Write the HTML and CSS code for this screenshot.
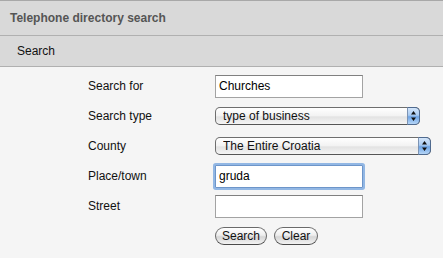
FILE: index.html
```html
<!DOCTYPE html>
<html lang="en">
<head>
    <meta charset="UTF-8">
    <meta name="viewport" content="width=device-width, initial-scale=1.0">
    <title>Telephone directory search</title>
    <link rel="stylesheet" href="styles.css">
</head>
<body>

<div class="title">Telephone directory search</div>
<div class="subtitle">Search</div>

<form class="search-form" action="#" method="get">
    <div class="row">
        <label for="searchFor">Search for</label>
        <input type="text" id="searchFor" class="text-field" value="Churches">
    </div>
    <div class="row">
        <label for="searchType">Search type</label>
        <span class="select-wrap type-select">
            <select id="searchType" class="select-field">
                <option>type of business</option>
            </select>
            <span class="knob">
                <svg width="7" height="12" viewBox="0 0 7 12"><path d="M3.5 1 L6 4.5 L1 4.5 Z M3.5 11 L6 7.5 L1 7.5 Z" fill="#111"/></svg>
            </span>
        </span>
    </div>
    <div class="row">
        <label for="county">County</label>
        <span class="select-wrap county-select">
            <select id="county" class="select-field">
                <option>The Entire Croatia</option>
            </select>
            <span class="knob">
                <svg width="7" height="12" viewBox="0 0 7 12"><path d="M3.5 1 L6 4.5 L1 4.5 Z M3.5 11 L6 7.5 L1 7.5 Z" fill="#111"/></svg>
            </span>
        </span>
    </div>
    <div class="row">
        <label for="place">Place/town</label>
        <input type="text" id="place" class="text-field focused" value="gruda">
    </div>
    <div class="row">
        <label for="street">Street</label>
        <input type="text" id="street" class="text-field" value="">
    </div>
    <div class="row">
        <span></span>
        <div class="buttons">
            <button type="submit" class="pill search-btn">Search</button>
            <button type="reset" class="pill clear-btn">Clear</button>
        </div>
    </div>
</form>

</body>
</html>
```

FILE: styles.css
```css
body {
    margin: 0;
    font-family: "Liberation Sans", Arial, sans-serif;
    font-size: 12px;
    background-color: #f5f5f5;
    color: #111;
}

.title {
    height: 34px;
    line-height: 34px;
    padding-left: 10px;
    background-color: #d9d9d9;
    border-top: 1px solid #a8a8a8;
    border-bottom: 1px solid #b0b0b0;
    font-weight: bold;
    color: #555;
}

.subtitle {
    height: 30px;
    line-height: 30px;
    padding-left: 17px;
    background-color: #d9d9d9;
    border-bottom: 1px solid #b0b0b0;
    color: #111;
}

.search-form {
    padding: 4px 0 0 88px;
}

.row {
    display: grid;
    grid-template-columns: 127px auto;
    align-items: center;
    height: 30px;
}

.row label {
    color: #111;
}

.text-field {
    box-sizing: border-box;
    width: 148px;
    height: 23px;
    margin: 0;
    padding: 0 3px;
    border: 1px solid #a3a3a3;
    border-top-color: #808080;
    background-color: #fff;
    font-family: "Liberation Sans", Arial, sans-serif;
    font-size: 12px;
    color: #000;
}

.text-field.focused {
    outline: none;
    border-color: #6d95c9;
    box-shadow: 0 0 0 2px #92b7e4;
    border-radius: 1px;
}

.select-wrap {
    position: relative;
    display: inline-block;
    height: 18px;
}

.type-select {
    width: 205px;
}

.county-select {
    width: 216px;
}

.select-field {
    -webkit-appearance: none;
    appearance: none;
    box-sizing: border-box;
    width: 100%;
    height: 18px;
    margin: 0;
    padding: 0 0 0 7px;
    border: 1px solid #6e6e6e;
    border-bottom-color: #555;
    border-radius: 5px;
    background: linear-gradient(#ffffff, #f2f2f2 50%, #e2e2e2 55%, #f4f4f4);
    font-family: "Liberation Sans", Arial, sans-serif;
    font-size: 12px;
    color: #111;
    line-height: 16px;
}

.knob {
    position: absolute;
    top: 0;
    right: 0;
    box-sizing: border-box;
    width: 13px;
    height: 18px;
    border: 1px solid #4f6a8f;
    border-left-color: #7c93b3;
    border-radius: 0 5px 5px 0;
    background: linear-gradient(#d3e5fa, #a9cbf2 45%, #6ea4e5 55%, #b6d6f7);
    display: flex;
    align-items: center;
    justify-content: center;
    pointer-events: none;
}

.buttons {
    display: flex;
    gap: 7px;
}

.pill {
    box-sizing: border-box;
    height: 18px;
    padding: 0;
    border: 1px solid #6a6a6a;
    border-bottom-color: #4a4a4a;
    border-radius: 9px;
    background: linear-gradient(#ffffff, #eeeeee 45%, #d6d6d6 55%, #f2f2f2);
    font-family: "Liberation Sans", Arial, sans-serif;
    font-size: 12px;
    color: #111;
    cursor: pointer;
}

.search-btn {
    width: 52px;
}

.clear-btn {
    width: 44px;
}
```
